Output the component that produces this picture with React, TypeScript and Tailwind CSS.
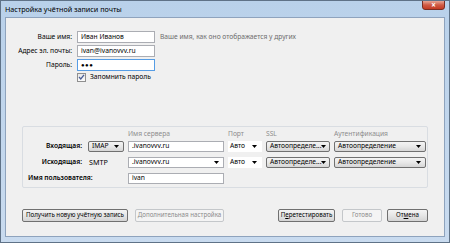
import React from 'react';

const Arrow = () => (
  <svg width="5" height="3" viewBox="0 0 5 3" className="shrink-0">
    <path d="M0 0h5L2.5 3z" fill="#000" />
  </svg>
);

const btn =
  'h-[13px] text-[6.2px] border border-[#707070] rounded-[2px] bg-gradient-to-b from-[#f4f4f4] via-[#e6e6e6] to-[#d4d4d4] flex items-center justify-center text-black';
const btnOff =
  'h-[13px] text-[6.2px] border border-[#c4c7ca] rounded-[2px] bg-[#f4f4f4] flex items-center justify-center text-[#8b8b8b]';
const combo =
  'h-[11px] border border-[#707070] rounded-[2px] bg-gradient-to-b from-[#f4f4f4] via-[#e8e8e8] to-[#d6d6d6] flex items-center justify-between pl-[3px] pr-[4px]';
const box = 'h-[12px] bg-white border border-[#abadb3] flex items-center px-[3px]';

const App: React.FC = () => {
  return (
    <div className="w-[450px] h-[243px] font-['Noto_Sans',sans-serif] text-[6.7px] leading-none text-black bg-gradient-to-b from-[#b9d1ea] to-[#c9dbef] border border-[#5f7287] flex flex-col overflow-hidden whitespace-nowrap">
      {/* заголовок окна */}
      <div className="h-[16px] flex items-start justify-between pl-[4px] pr-[4px]">
        <span className="mt-[5px] text-[7.2px]">Настройка учётной записи почты</span>
        <div className="w-[23px] h-[10px] -mt-px rounded-b-[3px] border border-[#7a2d22] bg-gradient-to-b from-[#e7a595] via-[#cf5a44] to-[#c43a22] flex items-center justify-center text-white text-[8px] font-bold">
          ×
        </div>
      </div>

      {/* содержимое */}
      <div className="flex-1 mx-[4px] mb-[5px] border border-[#8ea3bd] bg-[#f0f0f0] flex flex-col">
        <div className="pt-[13px] grid grid-cols-[66px_78px_auto] gap-x-[5px] gap-y-[2px] items-center">
          <span className="text-right">Ваше имя:</span>
          <div className={box}>Иван Иванов</div>
          <span className="text-[#6d6d6d]">Ваше имя, как оно отображается у других</span>

          <span className="text-right">Адрес эл. почты:</span>
          <div className={box}>ivan@ivanovvv.ru</div>
          <span />

          <span className="text-right">Пароль:</span>
          <div className="h-[12px] bg-white border border-[#569de5] flex items-center px-[3px] text-[6px] tracking-[0.5px]">
            ●●●
          </div>
          <span />

          <span />
          <div className="col-span-2 flex items-center gap-[4px] h-[10px] -mt-[1px]">
            <div className="w-[9px] h-[9px] border border-[#8f8f8f] bg-gradient-to-b from-[#e8e8e8] to-[#fbfbfb] flex items-center justify-center">
              <svg width="7" height="6" viewBox="0 0 7 6">
                <path d="M1 3l1.8 2L6 0.8" stroke="#4a5f97" strokeWidth="1.3" fill="none" />
              </svg>
            </div>
            <span>Запомнить пароль</span>
          </div>
        </div>

        {/* сервера */}
        <div className="mt-[44px] ml-[16px] w-[406px] border border-[#d9dde2] rounded-[2px] pt-[2px] pb-[3px] pl-[1px]">
          <div className="grid grid-cols-[60px_36px_96px_34px_64px_92px] gap-x-[4px] items-center">
            <span />
            <span />
            <span className="text-[#8d8d8d] h-[10px] flex items-center">Имя сервера</span>
            <span className="text-[#8d8d8d]">Порт</span>
            <span className="text-[#8d8d8d]">SSL</span>
            <span className="text-[#8d8d8d]">Аутентификация</span>
          </div>
          <div className="mt-[2px] grid grid-cols-[60px_36px_96px_34px_64px_92px] gap-x-[4px] gap-y-[5px] items-center">
            <span className="text-right pr-[2px] font-semibold">Входящая:</span>
            <div className={combo}>
              <span>IMAP</span>
              <Arrow />
            </div>
            <div className="h-[11px] bg-white border border-[#abadb3] flex items-center px-[3px]">.ivanovvv.ru</div>
            <div className="h-[11px] bg-white flex items-center justify-between pl-[2px] pr-[5px]">
              <span>Авто</span>
              <Arrow />
            </div>
            <div className={combo}>
              <span>Автоопределе...</span>
              <Arrow />
            </div>
            <div className={combo}>
              <span>Автоопределение</span>
              <Arrow />
            </div>

            <span className="text-right pr-[2px] font-semibold">Исходящая:</span>
            <span className="pl-[1px] text-[7.2px]">SMTP</span>
            <div className="h-[11px] bg-white border border-[#abadb3] flex items-center justify-between pl-[3px] pr-[4px]">
              <span>.ivanovvv.ru</span>
              <Arrow />
            </div>
            <div className="h-[11px] bg-white flex items-center justify-between pl-[2px] pr-[5px]">
              <span>Авто</span>
              <Arrow />
            </div>
            <div className={combo}>
              <span>Автоопределе...</span>
              <Arrow />
            </div>
            <div className={combo}>
              <span>Автоопределение</span>
              <Arrow />
            </div>

            <span className="col-span-2 pl-[4px] font-semibold">Имя пользователя:</span>
            <div className="h-[11px] bg-white border border-[#abadb3] flex items-center px-[3px]">ivan</div>
          </div>
        </div>

        {/* кнопки */}
        <div className="mt-[21px] mx-[16px] flex items-center">
          <div className={`${btn} w-[106px]`}>Получить новую учётную запись</div>
          <div className={`${btnOff} w-[89px] ml-[7px]`}>Дополнительная настройка</div>
          <div className={`${btn} w-[57px] ml-auto`}>
            <span>П<span className="underline">е</span>ретестировать</span>
          </div>
          <div className={`${btnOff} w-[40px] ml-[7px]`}>Готово</div>
          <div className={`${btn} w-[41px] ml-[5px]`}>
            <span>От<span className="underline">м</span>ена</span>
          </div>
        </div>
      </div>
    </div>
  );
};

export default App;
